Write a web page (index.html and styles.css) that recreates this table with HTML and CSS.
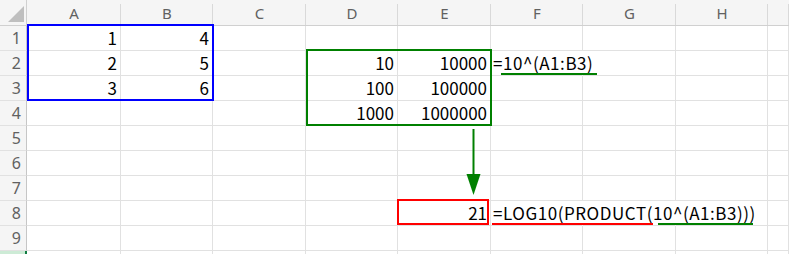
FILE: index.html
```html
<!DOCTYPE html>
<html lang="ja">
<head>
<meta charset="utf-8">
<title>Sheet</title>
<link rel="stylesheet" href="styles.css">
</head>
<body>
<div class="sheet">
  <div class="row head">
    <div class="corner"></div><div class="ch">A</div><div class="ch">B</div><div class="ch">C</div><div class="ch">D</div><div class="ch">E</div><div class="ch">F</div><div class="ch">G</div><div class="ch">H</div><div class="ch"></div>
  </div>
  <div class="row">
    <div class="rh">1</div><div class="c num">1</div><div class="c num">4</div><div class="c"></div><div class="c"></div><div class="c"></div><div class="c"></div><div class="c"></div><div class="c"></div><div class="c"></div>
  </div>
  <div class="row">
    <div class="rh">2</div><div class="c num">2</div><div class="c num">5</div><div class="c"></div><div class="c num">10</div><div class="c num">10000</div><div class="c txt spill">=10^(A1:B3)</div><div class="c"></div><div class="c"></div><div class="c"></div>
  </div>
  <div class="row">
    <div class="rh">3</div><div class="c num">3</div><div class="c num">6</div><div class="c"></div><div class="c num">100</div><div class="c num">100000</div><div class="c"></div><div class="c"></div><div class="c"></div><div class="c"></div>
  </div>
  <div class="row">
    <div class="rh">4</div><div class="c"></div><div class="c"></div><div class="c"></div><div class="c num">1000</div><div class="c num">1000000</div><div class="c"></div><div class="c"></div><div class="c"></div><div class="c"></div>
  </div>
  <div class="row">
    <div class="rh">5</div><div class="c"></div><div class="c"></div><div class="c"></div><div class="c"></div><div class="c"></div><div class="c"></div><div class="c"></div><div class="c"></div><div class="c"></div>
  </div>
  <div class="row">
    <div class="rh">6</div><div class="c"></div><div class="c"></div><div class="c"></div><div class="c"></div><div class="c"></div><div class="c"></div><div class="c"></div><div class="c"></div><div class="c"></div>
  </div>
  <div class="row">
    <div class="rh">7</div><div class="c"></div><div class="c"></div><div class="c"></div><div class="c"></div><div class="c"></div><div class="c"></div><div class="c"></div><div class="c"></div><div class="c"></div>
  </div>
  <div class="row">
    <div class="rh">8</div><div class="c"></div><div class="c"></div><div class="c"></div><div class="c"></div><div class="c num">21</div><div class="c txt spill">=LOG10(PRODUCT(10^(A1:B3)))</div><div class="c spill"></div><div class="c"></div><div class="c"></div>
  </div>
  <div class="row">
    <div class="rh">9</div><div class="c"></div><div class="c"></div><div class="c"></div><div class="c"></div><div class="c"></div><div class="c"></div><div class="c"></div><div class="c"></div><div class="c"></div>
  </div>
  <div class="row">
    <div class="rh active"></div><div class="c"></div><div class="c"></div><div class="c"></div><div class="c"></div><div class="c"></div><div class="c"></div><div class="c"></div><div class="c"></div><div class="c"></div>
  </div>

  <div class="sel sel-blue"></div>
  <div class="sel sel-green"></div>
  <div class="sel sel-red"></div>
  <div class="mark mark-f2"></div>
  <div class="mark mark-red"></div>
  <div class="mark mark-green"></div>
  <svg class="arrow" width="30" height="75" viewBox="0 0 30 75">
    <line x1="13.5" y1="4" x2="13.5" y2="51" stroke="#008000" stroke-width="2"/>
    <polygon points="6.5,49 20.5,49 13.5,70" fill="#008000"/>
  </svg>
</div>
</body>
</html>
```

FILE: styles.css
```css
html, body {
  margin: 0;
  padding: 0;
  background: #ffffff;
}

body {
  font-family: "Noto Sans CJK JP", "Noto Sans", sans-serif;
  overflow: hidden;
}

.sheet {
  position: relative;
  width: 789px;
  height: 254px;
  overflow: hidden;
}

.row {
  display: grid;
  grid-template-columns: 27px 94px 92px 93px 92px 93px 92px 93px 92px 1fr;
  height: 25px;
}

.row > div {
  box-sizing: border-box;
  border-right: 1px solid #e1e1e1;
  border-bottom: 1px solid #e1e1e1;
}

.head {
  height: 26px;
  background: #f5f5f5;
}

.head > div {
  border-bottom-color: #d0d0d0;
}

.corner {
  position: relative;
  border-right-color: #d0d0d0 !important;
}

.corner::after {
  content: "";
  position: absolute;
  right: 2px;
  bottom: 3px;
  width: 16px;
  height: 16px;
  background: #bfbfbf;
  clip-path: polygon(100% 0, 100% 100%, 0 100%);
}

.row > .ch {
  border-right: none;
  background: linear-gradient(#d9d9d9, #d9d9d9) no-repeat right bottom / 1px 21px;
  display: flex;
  justify-content: center;
  align-items: flex-end;
  padding-bottom: 2px;
  font-family: "Noto Sans", sans-serif;
  font-size: 15px;
  line-height: 20px;
  color: #616161;
}

.row > .rh {
  background: #f5f5f5;
  border-right-color: #c6c6c6;
  display: flex;
  justify-content: flex-end;
  align-items: flex-end;
  padding: 0 5px 1px 0;
  font-family: "Noto Sans", sans-serif;
  font-size: 16px;
  line-height: 21px;
  color: #616161;
}

.row > .rh.active {
  background: #cdebd6;
  border-right: 2px solid #107c41;
}

.c {
  display: flex;
  align-items: flex-end;
  padding: 0 3px 2px 3px;
  font-size: 17px;
  line-height: 20px;
  color: #000000;
  white-space: nowrap;
}

.num {
  justify-content: flex-end;
  padding-right: 3px;
}

.txt {
  justify-content: flex-start;
  padding-left: 2px;
  letter-spacing: 0.55px;
  overflow: visible;
}

.row > .spill {
  border-right-color: transparent;
}

.sel {
  position: absolute;
  box-sizing: border-box;
  border: 2px solid;
}

.sel-blue {
  left: 27px;
  top: 24px;
  width: 187px;
  height: 77px;
  border-color: #0000ff;
}

.sel-green {
  left: 306px;
  top: 49px;
  width: 186px;
  height: 77px;
  border-color: #008000;
}

.sel-red {
  left: 397px;
  top: 199px;
  width: 92px;
  height: 26px;
  border-color: #ff0000;
}

.mark {
  position: absolute;
  height: 2px;
}

.mark-f2 {
  left: 501px;
  top: 73px;
  width: 96px;
  background: #008000;
}

.mark-red {
  left: 492px;
  top: 223px;
  width: 161px;
  background: #ff0000;
}

.mark-green {
  left: 658px;
  top: 223px;
  width: 95px;
  background: #008000;
}

.arrow {
  position: absolute;
  left: 460px;
  top: 125px;
}
```
